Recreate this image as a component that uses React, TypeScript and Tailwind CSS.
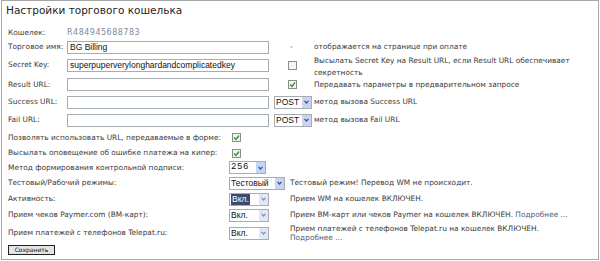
import React from "react";

function Check({ checked }: { checked?: boolean }) {
  return (
    <div className="w-[9px] h-[9px] border border-[#8c8c8c] bg-[#f4f4f4] flex items-center justify-center">
      {checked && (
        <svg width="7" height="7" viewBox="0 0 7 7">
          <path d="M1 3.5 L3 5.5 L6 1.5" stroke="#2a9a2a" strokeWidth="1.4" fill="none" />
        </svg>
      )}
    </div>
  );
}

function Sel({ value, w, active, pale, mono }: { value: string; w: string; active?: boolean; pale?: boolean; mono?: boolean }) {
  return (
    <div className={`${w} h-[13px] border border-[#a5acb2] bg-white flex items-stretch`}>
      <div className="flex-1 flex items-center pl-[1px] overflow-hidden">
        <span
          className={
            (mono ? "font-['Liberation_Mono'] text-[9px] tracking-[0.6px] " : "font-['Liberation_Sans'] text-[8.5px] ") +
            (active ? "bg-[#3b4a6e] text-white px-[1px] leading-[11px]" : "text-[#111] leading-[11px]")
          }
        >
          {value}
        </span>
      </div>
      <div className={`w-[9px] flex items-center justify-center ${pale ? "bg-[#e1e8f5]" : "bg-[#c6d5f6]"}`}>
        <svg width="5" height="4" viewBox="0 0 5 4">
          <path d="M0.5 0.8 L2.5 3 L4.5 0.8" stroke={pale ? "#7d8cb0" : "#3c4f86"} strokeWidth="1.2" fill="none" />
        </svg>
      </div>
    </div>
  );
}

function Input({ value }: { value?: string }) {
  return (
    <div className="w-[202px] h-[13px] border border-[#a5acb2] bg-white flex items-center px-[2px] font-['Liberation_Sans'] text-[8.5px] text-[#111]">
      {value}
    </div>
  );
}

export default function App() {
  return (
    <div className="w-[600px] h-[261px] bg-white font-['DejaVu_Sans',sans-serif] text-[7.4px] text-[#3a3a3a]">
      <div className="ml-[1px] w-[598px] h-[260px] border border-[#a6a6a6] px-[6px]">
        {/* title */}
        <div className="h-[20px] flex items-center text-[10.5px] text-[#1e1e1e] -ml-[2px]">
          Настройки торгового кошелька
        </div>

        <div className="h-[5px]" />

        {/* wallet */}
        <div className="h-[14px] flex items-center">
          <div className="w-[59px]">Кошелек:</div>
          <div className="text-[8px] tracking-[0.5px] text-[#7d8a98]">R484945688783</div>
        </div>

        <div className="h-[14px] flex items-center">
          <div className="w-[59px]">Торговое имя:</div>
          <Input value="BG Billing" />
          <div className="w-[45px] pl-[21px]">-</div>
          <div>отображается на странице при оплате</div>
        </div>

        <div className="h-[22px] flex items-center">
          <div className="w-[59px]">Secret Key:</div>
          <Input value="superpuperverylonghardandcomplicatedkey" />
          <div className="w-[45px] pl-[19px]">
            <Check />
          </div>
          <div className="self-start pt-[1px] leading-[12px] w-[270px]">
            Высылать Secret Key на Result URL, если Result URL обеспечивает секретность
          </div>
        </div>

        <div className="h-[17px] flex items-center">
          <div className="w-[59px]">Result URL:</div>
          <Input />
          <div className="w-[45px] pl-[19px]">
            <Check checked />
          </div>
          <div>Передавать параметры в предварительном запросе</div>
        </div>

        <div className="h-[18px] flex items-center">
          <div className="w-[59px]">Success URL:</div>
          <Input />
          <div className="pl-[5px] pr-[2px]">
            <Sel value="POST" w="w-[38px]" />
          </div>
          <div>метод вызова Success URL</div>
        </div>

        <div className="h-[18px] flex items-center">
          <div className="w-[59px]">Fail URL:</div>
          <Input />
          <div className="pl-[5px] pr-[2px]">
            <Sel value="POST" w="w-[38px]" />
          </div>
          <div>метод вызова Fail URL</div>
        </div>

        <div className="h-[17px] flex items-center">
          <div className="w-[224px]">Позволять использовать URL, передаваемые в форме:</div>
          <Check checked />
        </div>

        <div className="h-[14px] flex items-center">
          <div className="w-[224px]">Высылать оповещение об ошибке платежа на кипер:</div>
          <Check checked />
        </div>

        <div className="h-[15px] flex items-center">
          <div className="w-[221px]">Метод формирования контрольной подписи:</div>
          <Sel value="256" w="w-[37px]" mono />
        </div>

        <div className="h-[16px] flex items-center">
          <div className="w-[221px]">Тестовый/Рабочий режимы:</div>
          <Sel value="Тестовый" w="w-[56px]" />
          <div className="pl-[5px]">Тестовый режим! Перевод WM не происходит.</div>
        </div>

        <div className="h-[16px] flex items-center">
          <div className="w-[221px]">Активность:</div>
          <Sel value="Вкл." w="w-[40px]" active pale />
          <div className="pl-[21px]">Прием WM на кошелек ВКЛЮЧЕН.</div>
        </div>

        <div className="h-[16px] flex items-center">
          <div className="w-[221px]">Прием чеков Paymer.com (ВМ-карт):</div>
          <Sel value="Вкл." w="w-[40px]" pale />
          <div className="pl-[21px]">
            Прием ВМ-карт или чеков Paymer на кошелек ВКЛЮЧЕН. <span className="text-[#4a5a78]">Подробнее ...</span>
          </div>
        </div>

        <div className="h-[20px] flex items-center">
          <div className="w-[221px]">Прием платежей с телефонов Telepat.ru:</div>
          <Sel value="Вкл." w="w-[40px]" pale />
          <div className="pl-[21px] leading-[9px]">
            Прием платежей с телефонов Telepat.ru на кошелек ВКЛЮЧЕН.
            <br />
            <span className="text-[#4a5a78]">Подробнее ...</span>
          </div>
        </div>

        <div className="pt-[2px]">
          <button className="w-[47px] h-[10px] border border-[#222] bg-[#e4e4e4] text-[6px] leading-[8px] text-[#111] flex items-center justify-center">
            Сохранить
          </button>
        </div>
      </div>
    </div>
  );
}
